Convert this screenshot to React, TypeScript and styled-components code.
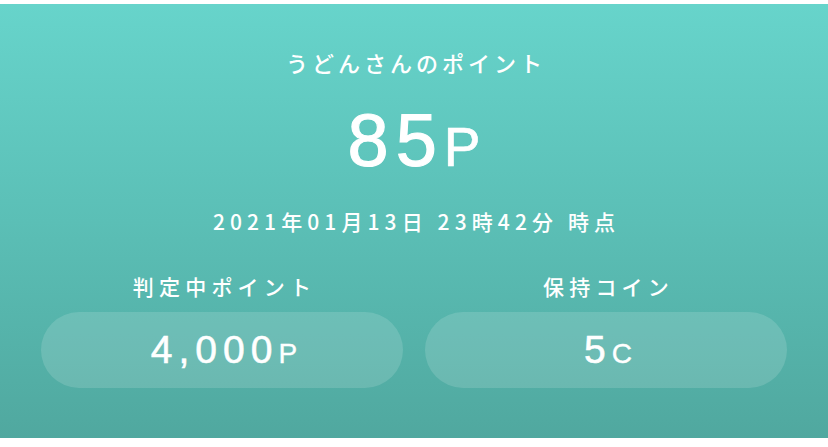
import styled, { createGlobalStyle } from "styled-components";

const GlobalStyle = createGlobalStyle`
    html, body {
        margin: 0;
        padding: 0;
        background: #ffffff;
    }
    body {
        font-family: "Noto Sans CJK JP", "Liberation Sans", sans-serif;
        -webkit-font-smoothing: antialiased;
    }
`;

const Page = styled.div`
    padding-top: 4px;
    width: 828px;
    height: 447px;
    box-sizing: border-box;
`;

const Panel = styled.section`
    height: 434px;
    box-sizing: border-box;
    padding: 36px 41px 0;
    display: flex;
    flex-direction: column;
    align-items: center;
    color: #ffffff;
    background: linear-gradient(180deg, #67d4cb 0%, #5bbfb6 50%, #50a89f 100%);
`;

const Title = styled.h2`
    margin: 0;
    font-size: 22px;
    font-weight: 500;
    line-height: 44px;
    letter-spacing: 4px;
    padding-left: 4px;
`;

const Total = styled.div`
    margin-top: 19px;
    display: flex;
    align-items: baseline;
    line-height: 76px;
    font-family: "Liberation Sans", sans-serif;
`;

const Amount = styled.span<{ $size: number; $spacing: number }>`
    font-size: ${(p) => p.$size}px;
    letter-spacing: ${(p) => p.$spacing}px;
    font-weight: 400;
    -webkit-text-stroke: 0.015em #ffffff;
`;

const Unit = styled.span<{ $size: number }>`
    font-size: ${(p) => p.$size}px;
    font-weight: 400;
    -webkit-text-stroke: 0.012em #ffffff;
`;

const Stamp = styled.p`
    margin: 21px 0 0;
    font-size: 21px;
    font-weight: 500;
    line-height: 30px;
    letter-spacing: 5.1px;
    padding-left: 5px;
`;

const Stats = styled.div`
    margin-top: 36px;
    width: 100%;
    display: grid;
    grid-template-columns: 1fr 1fr;
    gap: 22px;
`;

const Stat = styled.div`
    display: flex;
    flex-direction: column;
    align-items: center;
`;

const Label = styled.h3`
    margin: 0;
    font-size: 21px;
    font-weight: 500;
    line-height: 28px;
    letter-spacing: 5.2px;
    padding-left: 5px;
`;

const Pill = styled.div`
    margin-top: 12px;
    width: 100%;
    height: 76px;
    border-radius: 38px;
    background: rgba(255, 255, 255, 0.14);
    display: flex;
    align-items: center;
    justify-content: center;
`;

const PillValue = styled.div`
    display: flex;
    align-items: baseline;
    padding-left: 4px;
    font-family: "Liberation Sans", sans-serif;
`;

const stats = [
    { label: "判定中ポイント", value: "4,000", unit: "P" },
    { label: "保持コイン", value: "5", unit: "C" },
];

const App = () => {
    return (
        <>
            <GlobalStyle />
            <Page>
                <Panel>
                    <Title>うどんさんのポイント</Title>
                    <Total>
                        <Amount $size={74} $spacing={7}>
                            85
                        </Amount>
                        <Unit $size={55}>P</Unit>
                    </Total>
                    <Stamp>2021年01月13日 23時42分 時点</Stamp>
                    <Stats>
                        {stats.map((s) => (
                            <Stat key={s.label}>
                                <Label>{s.label}</Label>
                                <Pill>
                                    <PillValue>
                                        <Amount $size={39} $spacing={6}>
                                            {s.value}
                                        </Amount>
                                        <Unit $size={28}>{s.unit}</Unit>
                                    </PillValue>
                                </Pill>
                            </Stat>
                        ))}
                    </Stats>
                </Panel>
            </Page>
        </>
    );
};

export default App;
